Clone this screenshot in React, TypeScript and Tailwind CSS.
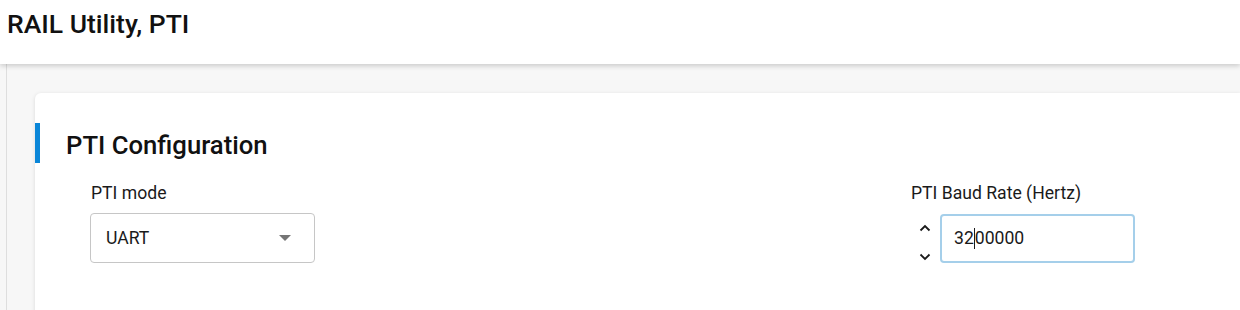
import React from "react";

export default function App() {
  return (
    <div
      className="w-[1240px] h-[310px] overflow-hidden bg-[#f7f7f7] flex flex-col"
      style={{ fontFamily: "Roboto, 'Liberation Sans', sans-serif" }}
    >
      <header className="h-16 shrink-0 bg-white relative z-10 shadow-[0_2px_5px_rgba(0,0,0,0.18)] flex items-start">
        <h1 className="ml-[7px] mt-[8px] text-[26.5px] leading-[32px] font-medium text-[#111]">
          RAIL Utility, PTI
        </h1>
      </header>
      <div className="flex flex-1 min-h-0">
        <div className="w-[6px] shrink-0" />
        <div className="flex-1 border-l border-[#dedede] pl-[28px] pt-[29px] min-w-0">
          <div className="bg-white rounded-tl-[6px] shadow-[0_1px_4px_rgba(0,0,0,0.12)] h-[260px] pt-[30px]">
            <div className="flex items-center h-[40px]">
              <div className="w-[5px] h-[40px] bg-[#0a86d8]" />
              <h2 className="ml-[26px] mt-[3px] text-[25.7px] leading-[32px] font-medium text-[#111]">
                PTI Configuration
              </h2>
            </div>
            <div className="flex mt-[17px]">
              <div className="ml-[55px] w-[225px] flex flex-col">
                <label className="ml-[1px] text-[17.6px] leading-[26px] text-[#1a1a1a]">PTI mode</label>
                <div className="mt-[7px] h-[50px] border border-[#c6c6c6] rounded-[4px] flex items-center justify-between pl-[15px] pr-[23px]">
                  <span className="text-[17.6px] text-[#1a1a1a]">UART</span>
                  <svg width="12" height="6" viewBox="0 0 12 6">
                    <path d="M0 0 L12 0 L6 6 Z" fill="#757575" />
                  </svg>
                </div>
              </div>
              <div className="ml-[596px] flex flex-col">
                <label className="text-[17.6px] leading-[26px] text-[#1a1a1a]">PTI Baud Rate (Hertz)</label>
                <div className="mt-[7px] flex items-center">
                  <div className="w-[29px] h-[50px] flex flex-col items-center justify-between pt-[11px] pb-[2px] pr-[1px]">
                    <svg width="12" height="8" viewBox="0 0 12 8">
                      <path d="M1.5 6.5 L6 2 L10.5 6.5" stroke="#1a1a1a" strokeWidth="1.8" fill="none" />
                    </svg>
                    <svg width="12" height="8" viewBox="0 0 12 8">
                      <path d="M1.5 1.5 L6 6 L10.5 1.5" stroke="#1a1a1a" strokeWidth="1.8" fill="none" />
                    </svg>
                  </div>
                  <div className="w-[195px] h-[49px] border-2 border-[#a5cfea] rounded-[4px] flex items-center pl-[12px]">
                    <span className="text-[17.6px] text-[#1a1a1a]">32</span>
                    <span className="w-[1px] h-[21px] bg-[#1a1a1a]" />
                    <span className="text-[17.6px] text-[#1a1a1a]">00000</span>
                  </div>
                </div>
              </div>
            </div>
          </div>
        </div>
      </div>
    </div>
  );
}
